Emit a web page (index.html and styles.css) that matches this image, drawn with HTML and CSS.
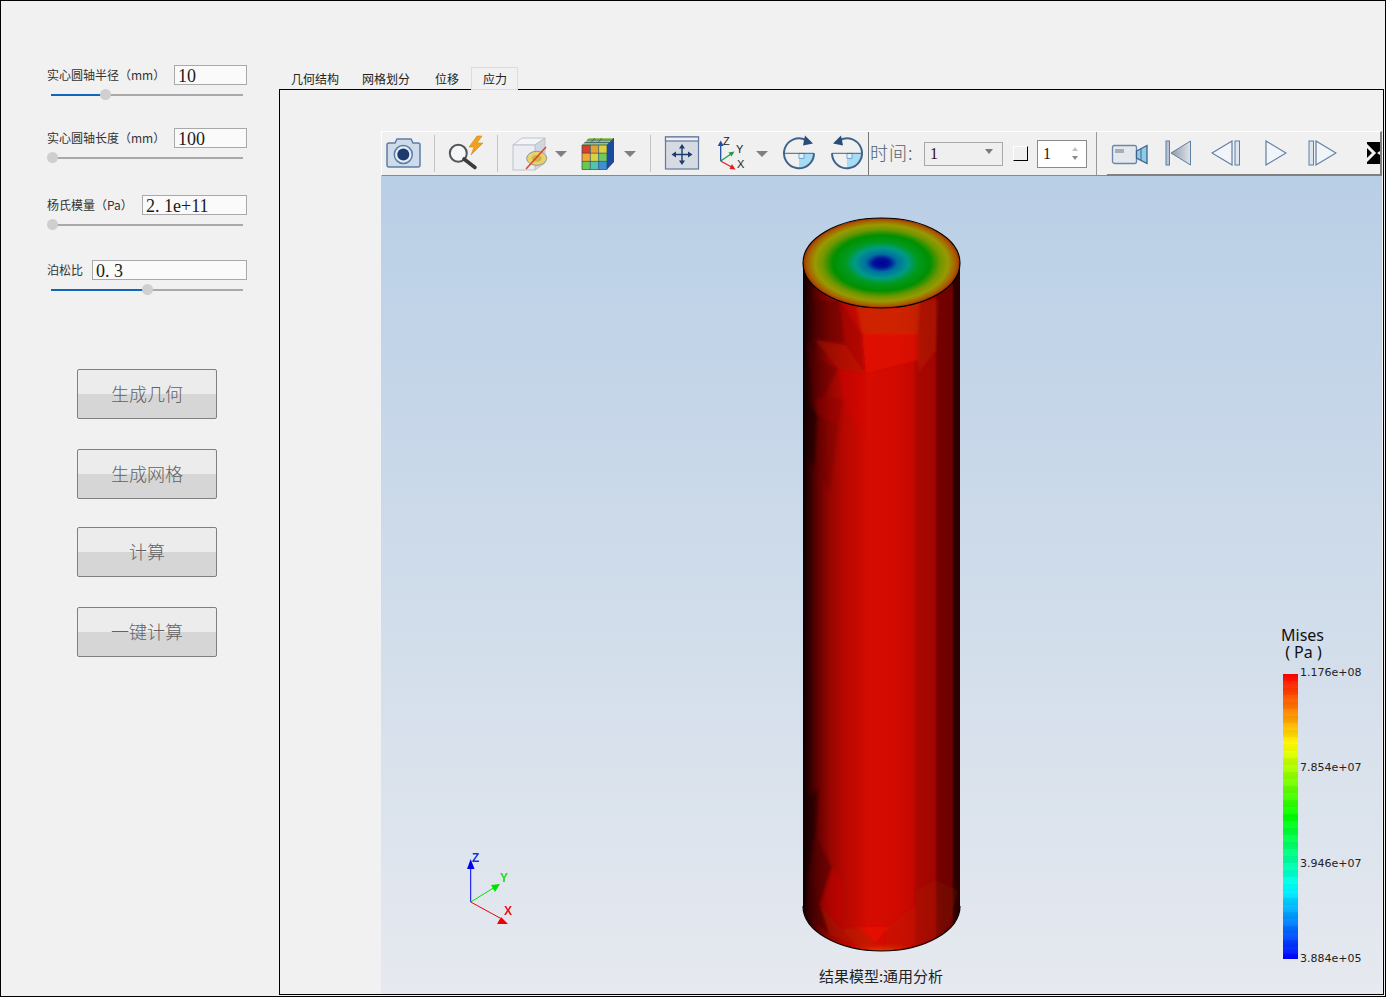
FILE: index.html
```html
<!DOCTYPE html>
<html lang="zh">
<head>
<meta charset="utf-8">
<title>实心圆轴分析</title>
<link rel="stylesheet" href="styles.css">
</head>
<body>
<div class="window">
  <aside class="side">
    <section class="field field-1">
      <div class="row"><label>实心圆轴半径（mm）</label><input class="w-s" value="10" readonly></div>
      <div class="slider"><span class="fill" style="width:54px"></span><span class="knob"></span></div>
    </section>
    <section class="field field-2">
      <div class="row"><label>实心圆轴长度（mm）</label><input class="w-s" value="100" readonly></div>
      <div class="slider"><span class="fill" style="width:1px"></span><span class="knob"></span></div>
    </section>
    <section class="field field-3">
      <div class="row"><label>杨氏模量（Pa）</label><input class="w-m" value="2. 1e+11" readonly></div>
      <div class="slider"><span class="fill" style="width:1px"></span><span class="knob"></span></div>
    </section>
    <section class="field field-4">
      <div class="row"><label>泊松比</label><input class="w-l" value="0. 3" readonly></div>
      <div class="slider"><span class="fill" style="width:96px"></span><span class="knob"></span></div>
    </section>
    <div class="actions">
      <button class="btn">生成几何</button>
      <button class="btn btn-a">生成网格</button>
      <button class="btn btn-b">计算</button>
      <button class="btn btn-a">一键计算</button>
    </div>
  </aside>

  <main class="main">
    <nav class="tabs">
      <span class="tab t1">几何结构</span>
      <span class="tab t2">网格划分</span>
      <span class="tab t3">位移</span>
      <span class="tab active">应力</span>
    </nav>
    <div class="pane">
      <div class="toolbar">
        <div class="tb tb-a">
          <svg class="ic i-camera" width="36" height="37" viewBox="0 0 36 37">
            <path d="M2 10 Q2 8 4 8 H10 L12 4 H26 L28 8 H33 Q35 8 35 10 V30 Q35 32 33 32 H4 Q2 32 2 30 Z" fill="#cfdbe9" stroke="#5c7ea6" stroke-width="1.5"/>
            <circle cx="18.3" cy="19.5" r="9" fill="#e6edf4" stroke="#5c7ea6" stroke-width="1.5"/>
            <circle cx="18.3" cy="19.5" r="6" fill="#1d3a6e"/>
          </svg>
          <i class="sep s1"></i>
          <svg class="ic i-search" width="37" height="37" viewBox="0 0 37 37">
            <polygon points="29,1 21,12 26,12 23,20 35,8 29,8 34,1" fill="#f0a020" stroke="#d98a10" stroke-width=".6"/>
            <circle cx="10.3" cy="18.3" r="8.5" fill="#f4f6f8" stroke="#555" stroke-width="2"/>
            <line x1="16" y1="24" x2="27" y2="32.5" stroke="#3c3c3c" stroke-width="3.6" stroke-linecap="round"/>
          </svg>
          <i class="sep s2"></i>
          <svg class="ic i-cube" width="37" height="37" viewBox="0 0 37 37">
            <path d="M2 10 L11 3 H34 L24 10 Z" fill="#f4f4f6" stroke="#bcc4d0"/>
            <path d="M24 10 L34 3 V28 L24 35 Z" fill="#d2d7df" stroke="#bcc4d0"/>
            <rect x="2" y="10" width="22" height="25" fill="#ebedf0" stroke="#bcc4d0"/>
            <ellipse cx="25.7" cy="23.3" rx="10" ry="7" fill="#e8d26a" stroke="#8f969e"/>
            <ellipse cx="25.7" cy="23.3" rx="5" ry="3.4" fill="#cdb24a"/>
            <line x1="15" y1="34" x2="35" y2="12" stroke="#d8492c" stroke-width="1.6"/>
          </svg>
          <i class="arrow a1"></i>
          <svg class="ic i-ccube" width="35" height="37" viewBox="0 0 35 37">
            <path d="M2 10 L9 3 H34 L27 10 Z" fill="#9cc468"/>
            <path d="M27 10 L34 3 V27 L27 34.5 Z" fill="#1b4a9e"/>
            <rect x="2" y="10" width="8.3" height="8.2" fill="#d8402a"/>
            <rect x="10.3" y="10" width="8.3" height="8.2" fill="#e8a030"/>
            <rect x="18.6" y="10" width="8.4" height="8.2" fill="#dccf40"/>
            <rect x="2" y="18.2" width="8.3" height="8.2" fill="#f0a830"/>
            <rect x="10.3" y="18.2" width="8.3" height="8.2" fill="#d6d440"/>
            <rect x="18.6" y="18.2" width="8.4" height="8.2" fill="#70c860"/>
            <rect x="2" y="26.4" width="8.3" height="8.1" fill="#68c850"/>
            <rect x="10.3" y="26.4" width="8.3" height="8.1" fill="#50c4b0"/>
            <rect x="18.6" y="26.4" width="8.4" height="8.1" fill="#3c90d8"/>
            <path d="M2 18.2 H27 M2 26.4 H27 M10.3 10 V34.5 M18.6 10 V34.5 M2 10 H27 V34.5 H2 Z M27 10 L34 3 M4.5 7.5 H29.5 M7 5 H32 M11 7.5 L15 3 M18 7.5 L22 3" fill="none" stroke="#27486f" stroke-width=".7"/>
          </svg>
          <i class="arrow a2"></i>
          <i class="sep s3"></i>
          <svg class="ic i-fit" width="36" height="37" viewBox="0 0 36 37">
            <rect x="1.5" y="2" width="33" height="32" fill="#d6dae3" stroke="#64789c" stroke-width="1.2"/>
            <rect x="1.5" y="2" width="33" height="4" fill="#eef0f4" stroke="#64789c" stroke-width="1.2"/>
            <path d="M18 11 V28 M9.5 19.5 H26.5" stroke="#1f3d6b" stroke-width="1.4"/>
            <path d="M18 9 L21 13.5 H15 Z M18 30 L21 25.5 H15 Z M7.5 19.5 L12 16.5 V22.5 Z M28.5 19.5 L24 16.5 V22.5 Z" fill="#1f3d6b"/>
          </svg>
          <svg class="ic i-axes" width="30" height="37" viewBox="0 0 30 37">
            <line x1="4.7" y1="26" x2="4.7" y2="10" stroke="#1d4fa8" stroke-width="1.3"/>
            <polygon points="4.7,5.5 1.7,11 7.7,11" fill="#1d4fa8"/>
            <line x1="4.7" y1="26" x2="15" y2="19" stroke="#1f9a4a" stroke-width="1.3"/>
            <polygon points="18.5,16.5 12.5,17.5 15.5,21.5" fill="#1f9a4a"/>
            <line x1="4.7" y1="26" x2="15.5" y2="32" stroke="#e02020" stroke-width="1.3"/>
            <polygon points="19.5,34.5 13.5,34 16,29" fill="#e02020"/>
            <text class="ax" x="7" y="10">Z</text>
            <text class="ax" x="20" y="18">Y</text>
            <text class="ax" x="21" y="33">X</text>
          </svg>
          <i class="arrow a3"></i>
          <svg class="ic i-rot" width="34" height="37" viewBox="0 0 34 37">
            <path d="M17 18.3 H32 A15 15 0 0 1 17 33.3 Z" fill="#a9dcf4"/>
            <rect x="17" y="18.3" width="5" height="5" fill="#dff2fb" stroke="#4f8ab8" stroke-width=".7"/>
            <path d="M32 18.3 A15 15 0 1 1 24 5" fill="none" stroke="#3f6489" stroke-width="2"/>
            <line x1="2" y1="18.3" x2="32" y2="18.3" stroke="#3f6489" stroke-width="1"/>
            <polygon points="23,0.5 31,8.5 21,10.5" fill="#284e78"/>
          </svg>
          <svg class="ic i-rot" width="34" height="37" viewBox="0 0 34 37">
            <path d="M17 18.3 H32 A15 15 0 0 1 17 33.3 Z" fill="#a9dcf4"/>
            <rect x="17" y="18.3" width="5" height="5" fill="#dff2fb" stroke="#4f8ab8" stroke-width=".7"/>
            <path d="M2 18.3 A15 15 0 1 0 10 5" fill="none" stroke="#3f6489" stroke-width="2"/>
            <line x1="2" y1="18.3" x2="32" y2="18.3" stroke="#3f6489" stroke-width="1"/>
            <polygon points="11,0.5 3,8.5 13,10.5" fill="#284e78"/>
          </svg>
        </div>
        <div class="tb tb-b">
          <span class="time">时间:</span>
          <span class="combo"><b>1</b><i class="caret"></i></span>
          <span class="check"></span>
          <span class="spin"><b>1</b><span class="spin-arrows"><i class="up"></i><i class="down"></i></span></span>
        </div>
        <div class="tb tb-c">
          <svg class="ic i-video" width="38" height="37" viewBox="0 0 38 37">
            <rect x="1.5" y="10.5" width="24" height="18" rx="2" fill="#e4e7ec" stroke="#6a86a8" stroke-width="1.3"/>
            <rect x="4" y="14" width="9" height="4" fill="#a8aeb8"/>
            <polygon points="25.5,16 36,10.5 36,28.5 25.5,23" fill="#8ecbe8" stroke="#3f6489" stroke-width="1.3"/>
            <line x1="30" y1="14" x2="30" y2="25" stroke="#3f6489"/>
          </svg>
          <svg class="ic i-first" width="27" height="37" viewBox="0 0 27 37">
            <defs><linearGradient id="g-first"><stop offset="0" stop-color="#8d9aa9"/><stop offset="1" stop-color="#dfe3e8"/></linearGradient></defs>
            <rect x="1" y="6" width="3.5" height="24" fill="#b6c4d6" stroke="#5f7ea3"/>
            <polygon points="6,18 25.5,6 25.5,30" fill="url(#g-first)" stroke="#5f7ea3"/>
          </svg>
          <svg class="ic i-prev" width="30" height="37" viewBox="0 0 30 37">
            <polygon points="1,18 21,6 21,30" fill="#f1f4f8" stroke="#5f7ea3" stroke-width="1.2"/>
            <rect x="24" y="6" width="4.5" height="24" fill="#dde5ee" stroke="#5f7ea3"/>
          </svg>
          <svg class="ic i-play" width="22" height="37" viewBox="0 0 22 37">
            <polygon points="1,6 21,18 1,30" fill="#f1f4f8" stroke="#5f7ea3" stroke-width="1.2"/>
          </svg>
          <svg class="ic i-next" width="29" height="37" viewBox="0 0 29 37">
            <rect x="1" y="6" width="4.5" height="24" fill="#dde5ee" stroke="#5f7ea3"/>
            <polygon points="8,6 28,18 8,30" fill="#f1f4f8" stroke="#5f7ea3" stroke-width="1.2"/>
          </svg>
          <svg class="ic i-last" width="19" height="37" viewBox="0 0 19 37">
            <defs><filter id="soft" x="-20%" y="-20%" width="140%" height="140%"><feGaussianBlur stdDeviation=".7"/></filter></defs>
            <g filter="url(#soft)">
              <rect x="2" y="7" width="14" height="22" fill="#000"/>
              <polyline points="1,10 9,18 1,26" fill="none" stroke="#f1f1f1" stroke-width="3"/>
              <polygon points="12,18 18,14 18,22" fill="#f1f1f1"/>
            </g>
          </svg>
        </div>
      </div>
      <div class="view">
        <svg class="scene" viewBox="381 176 1000 818" width="1000" height="818">
          <defs>
            <linearGradient id="body" x1="0" x2="1" y1="0" y2="0">
              <stop offset="0" stop-color="#0d0000"/>
              <stop offset=".04" stop-color="#300000"/>
              <stop offset=".1" stop-color="#680200"/>
              <stop offset=".17" stop-color="#960600"/>
              <stop offset=".27" stop-color="#b80800"/>
              <stop offset=".36" stop-color="#c80a00"/>
              <stop offset=".42" stop-color="#d60c00"/>
              <stop offset=".62" stop-color="#d00a00"/>
              <stop offset=".7" stop-color="#c40800"/>
              <stop offset=".725" stop-color="#ac0600"/>
              <stop offset=".84" stop-color="#a00600"/>
              <stop offset=".855" stop-color="#760000"/>
              <stop offset=".95" stop-color="#6e0000"/>
              <stop offset=".96" stop-color="#2e0000"/>
              <stop offset="1" stop-color="#2a0000"/>
            </linearGradient>
            <radialGradient id="top" cx=".5" cy=".5" r=".5">
              <stop offset="0" stop-color="#000090"/>
              <stop offset=".1" stop-color="#00109a"/>
              <stop offset=".2" stop-color="#0070a0"/>
              <stop offset=".34" stop-color="#009a88"/>
              <stop offset=".46" stop-color="#009a20"/>
              <stop offset=".62" stop-color="#009000"/>
              <stop offset=".75" stop-color="#709600"/>
              <stop offset=".85" stop-color="#989a00"/>
              <stop offset=".95" stop-color="#a85c00"/>
              <stop offset="1" stop-color="#a03000"/>
            </radialGradient>
            <radialGradient id="glow" cx=".5" cy=".5" r=".5">
              <stop offset="0" stop-color="#e86a00" stop-opacity=".9"/>
              <stop offset="1" stop-color="#d01000" stop-opacity="0"/>
            </radialGradient>
            <filter id="shade" x="-5%" y="-5%" width="110%" height="110%"><feGaussianBlur stdDeviation="1.4"/></filter>
            <clipPath id="cyl"><path d="M803 263 V906 A78.5 45 0 0 0 960 906 V263 Z"/></clipPath>
          </defs>
          <g clip-path="url(#cyl)">
            <rect x="803" y="218" width="157" height="734" fill="url(#body)"/>
            <g filter="url(#shade)">
              <polygon points="855,300 920,300 918,333 890,335 862,333" fill="#cc3000" opacity=".6"/>
              <polygon points="862,333 918,333 918,360 866,373" fill="#e41000" opacity=".6"/>
              <polygon points="840,300 862,333 865,373 845,345" fill="#8a0a00" opacity=".35"/>
              <polygon points="808,300 840,300 845,345 815,340" fill="#300000" opacity=".35"/>
              <polygon points="815,340 845,345 865,373 838,368" fill="#a81800" opacity=".4"/>
              <polygon points="838,368 865,373 862,440 843,400" fill="#e01000" opacity=".3"/>
              <polygon points="806,340 820,360 838,368 825,395 815,400" fill="#5a0000" opacity=".4"/>
              <polygon points="815,400 825,395 843,400 838,425 818,415" fill="#8a0800" opacity=".4"/>
              <polygon points="806,400 818,415 815,470 806,450" fill="#150000" opacity=".5"/>
              <polygon points="818,415 838,425 830,490 815,470" fill="#600300" opacity=".3"/>
              <polygon points="918,300 938,300 936,350 918,373" fill="#b83000" opacity=".3"/>
              <polygon points="803,800 818,790 815,835 808,880 803,880" fill="#100000" opacity=".5"/>
              <polygon points="815,835 832,868 820,905 808,880" fill="#4a0000" opacity=".5"/>
              <polygon points="832,868 842,880 842,930 820,905" fill="#d01000" opacity=".4"/>
              <polygon points="808,880 820,905 830,935 806,915" fill="#400800" opacity=".5"/>
              <polygon points="820,905 842,930 860,945 830,935" fill="#a81800" opacity=".5"/>
              <polygon points="860,927 888,927 875,943" fill="#e81400" opacity=".8"/>
              <polygon points="842,930 860,927 875,943 860,948" fill="#b82000" opacity=".5"/>
              <polygon points="888,927 916,905 916,945 885,948" fill="#b82000" opacity=".3"/>
              <polygon points="916,890 936,880 940,935 916,945" fill="#a82800" opacity=".25"/>
              <polygon points="936,880 958,890 950,925 940,935" fill="#7a1800" opacity=".3"/>
            </g>
            <ellipse cx="881" cy="953" rx="50" ry="11" fill="url(#glow)"/>
          </g>
          <path d="M803 906 A78.5 45 0 0 0 960 906" fill="none" stroke="#100000" stroke-width="1.2"/>
          <ellipse cx="881.5" cy="263" rx="78.5" ry="45" fill="url(#top)" stroke="#000" stroke-width="1.1"/>

          <g class="triad">
            <line x1="470.7" y1="902" x2="470.7" y2="866" stroke="#0000f0" stroke-width="1"/>
            <polygon points="470.7,859 467,869 474.5,869" fill="#0000f0"/>
            <line x1="470.7" y1="902" x2="495" y2="887" stroke="#00e000" stroke-width="1"/>
            <polygon points="500,884 491,885 495,892" fill="#00e000"/>
            <line x1="470.7" y1="902" x2="500" y2="918" stroke="#f00000" stroke-width="1"/>
            <polygon points="508,924 497,924 501,917" fill="#f00000"/>
            <text class="t-z" x="472" y="862">Z</text>
            <text class="t-y" x="500" y="882">Y</text>
            <text class="t-x" x="504" y="915">X</text>
          </g>
        </svg>
        <div class="legend">
          <div class="legend-title">Mises<br>&nbsp;( Pa )</div>
          <div class="legend-body">
            <div class="bar"></div>
            <div class="scale">
              <span>1.176e+08</span>
              <span>7.854e+07</span>
              <span>3.946e+07</span>
              <span>3.884e+05</span>
            </div>
          </div>
        </div>
        <div class="caption">结果模型:通用分析</div>
      </div>
    </div>
  </main>
</div>
</body>
</html>
```

FILE: styles.css
```css
* { box-sizing: border-box; }
html, body { margin: 0; padding: 0; }
body {
  width: 1386px;
  height: 997px;
  overflow: hidden;
  font-family: "Noto Sans CJK SC", "Noto Sans", sans-serif;
  color: #222;
  background: #f1f1f1;
}
.window {
  display: flex;
  width: 1386px;
  height: 997px;
  border: 1px solid #000;
  background: #f1f1f1;
}

/* left panel */
.side { width: 278px; flex: none; padding: 64px 0 0 45px; }
.field { width: 201px; }
.field-2 { margin-top: 28px; }
.field-3 { margin-top: 32px; }
.field-4 { margin-top: 30px; }
.row { display: flex; justify-content: space-between; align-items: center; height: 20px; }
.row label { font-size: 12px; line-height: 20px; color: #333; white-space: nowrap; padding-left: 1px; }
.row input {
  height: 20px;
  border: 1px solid #a9a9a9;
  background: #fafafa;
  padding: 2px 0 0 3px;
  margin: 0;
  font: 18px/17px "Liberation Serif", serif;
  color: #1c1c1c;
  outline: none;
}
.w-s { width: 73px; }
.w-m { width: 105px; }
.w-l { width: 155px; }
.slider {
  display: flex;
  align-items: center;
  width: 192px;
  height: 11px;
  margin: 4px 0 0 5px;
  background: linear-gradient(#a9a9a9, #a9a9a9) center / 100% 2px no-repeat;
}
.fill { height: 2px; background: #0f66ba; flex: none; }
.knob { width: 11px; height: 11px; margin-left: -5px; border-radius: 50%; background: #cfcfcf; flex: none; }

.actions { display: flex; flex-direction: column; align-items: flex-start; margin: 74px 0 0 31px; }
.btn {
  width: 140px;
  height: 50px;
  padding: 0 0 3px;
  border: 1px solid #808080;
  border-radius: 2px;
  background: linear-gradient(#ececec 0, #ececec 50%, #d6d6d6 50%, #d6d6d6 100%);
  font-family: "Noto Sans CJK SC", sans-serif;
  font-size: 18px;
  font-weight: 300;
  color: #626262;
}
.btn-a { margin-top: 30px; }
.btn-b { margin-top: 28px; }

/* main */
.main { flex: 1; display: flex; flex-direction: column; padding: 66px 1px 1px 0; min-width: 0; }
.tabs { display: flex; height: 22px; flex: none; }
.tab { height: 22px; font-size: 12px; line-height: 24px; color: #222; white-space: nowrap; }
.t1 { padding: 0 12px; }
.t2 { padding: 0 13px 0 11px; }
.t3 { padding: 0 12px; }
.active {
  height: 23px;
  padding: 0 10px 0 11px;
  border: 1px solid #dcdcdc;
  line-height: 22px;
  background: #f1f1f1;
  position: relative;
  z-index: 1;
}
.pane {
  flex: 1;
  display: flex;
  flex-direction: column;
  min-height: 0;
  border: 1px solid #000;
  padding: 41px 1px 0 101px;
}

/* toolbar */
.toolbar {
  display: flex;
  flex: none;
  height: 45px;
  border-top: 1px solid #fff;
  border-left: 1px solid #fff;
  border-bottom: 1px solid #8a8a8a;
  background: #f0f0f0;
}
.tb { display: flex; align-items: center; flex: none; height: 43px; }
.ic { flex: none; display: block; }
.tb-a { width: 487px; border-right: 1px solid #777; }
.tb-b { width: 228px; border-right: 1px solid #999; }
.tb-c {
  width: 275px;
  height: 45px;
  margin: -1px 0 -1px 10px;
  border-top: 1px solid #fff;
  border-bottom: 2px solid #808080;
  border-right: 2px solid #808080;
  overflow: hidden;
}
.sep { display: block; width: 1px; height: 37px; background: #c4c4c4; flex: none; }
.arrow {
  display: block;
  flex: none;
  width: 0;
  height: 0;
  border-left: 6px solid transparent;
  border-right: 6px solid transparent;
  border-top: 6px solid #808080;
}
.i-camera { margin-left: 3px; }
.s1 { margin-left: 13px; }
.i-search { margin-left: 13px; }
.s2 { margin-left: 12px; }
.i-cube { margin-left: 13px; }
.a1 { margin-left: 7px; }
.i-ccube { margin-left: 13px; }
.a2 { margin-left: 9px; }
.s3 { margin-left: 14px; }
.i-fit { margin-left: 13px; }
.i-axes { margin-left: 16px; }
.a3 { margin-left: 10px; }
.i-rot { margin-left: 14px; }
.ax { font: 11px "Liberation Sans", sans-serif; fill: #222; }

.time {
  width: 45px;
  margin-left: 1px;
  padding-bottom: 4px;
  font-size: 18px;
  font-weight: 300;
  letter-spacing: 1px;
  color: #50606e;
  white-space: nowrap;
}
.combo {
  display: flex;
  align-items: center;
  justify-content: space-between;
  width: 79px;
  height: 24px;
  margin-left: 9px;
  padding: 0 9px 0 5px;
  border: 1px solid #a8a8a8;
  background: #efefef;
}
.combo b, .spin b { font: 16px "Liberation Serif", serif; color: #3a0f14; }
.caret {
  display: block;
  width: 0;
  height: 0;
  margin-top: -4px;
  border-left: 4px solid transparent;
  border-right: 4px solid transparent;
  border-top: 5px solid #7a7a7a;
}
.check {
  display: block;
  flex: none;
  width: 15px;
  height: 15px;
  margin-left: 10px;
  border-right: 1px solid #000;
  border-bottom: 1px solid #000;
  border-top: 1px solid #fff;
  border-left: 1px solid #fff;
}
.spin {
  display: flex;
  align-items: center;
  justify-content: space-between;
  flex: none;
  width: 50px;
  height: 28px;
  margin-left: 9px;
  padding: 0 8px 0 5px;
  border: 1px solid #8a8a8a;
  background: #fff;
}
.spin-arrows { display: flex; flex-direction: column; gap: 5px; }
.up, .down { display: block; width: 0; height: 0; border-left: 3px solid transparent; border-right: 3px solid transparent; }
.up { border-bottom: 4px solid #c4c4c4; }
.down { border-top: 4px solid #8a8a8a; }
.i-video { margin-left: 4px; }
.i-first { margin-left: 16px; }
.i-prev { margin-left: 19px; }
.i-play { margin-left: 24px; }
.i-next { margin-left: 21px; }
.i-last { margin-left: 28px; }

/* 3D view */
.view {
  flex: 1;
  position: relative;
  overflow: hidden;
  background: linear-gradient(#b9cfe6 0%, #e6e9ef 100%);
}
.scene { position: absolute; left: 0; top: 0; display: block; }
.triad text { font: bold 12px "Liberation Sans", sans-serif; }
.t-z { fill: #1030e0; }
.t-y { fill: #20e020; }
.t-x { fill: #f01010; }

.legend { position: absolute; left: 900px; top: 451px; color: #111; }
.legend-title { font-size: 16px; line-height: 17px; font-family: "Noto Sans", sans-serif; }
.legend-body { display: flex; margin-top: 13px; }
.bar {
  width: 15px;
  height: 285px;
  margin-left: 2px;
  background:
    repeating-linear-gradient(rgba(0,0,0,.035) 0 7px, rgba(255,255,255,.03) 7px 14px),
    linear-gradient(#ff0000 0%, #ffff00 25%, #00ff00 50%, #00ffff 75%, #0000ff 100%);
}
.scale {
  display: flex;
  flex-direction: column;
  justify-content: space-between;
  height: 302px;
  margin: -9px 0 0 2px;
  font: 11px/16px "DejaVu Sans", sans-serif;
  color: #222;
}
.caption {
  position: absolute;
  left: 400px;
  top: 789px;
  width: 200px;
  text-align: center;
  font-size: 15px;
  line-height: 22px;
  color: #222;
}
```
